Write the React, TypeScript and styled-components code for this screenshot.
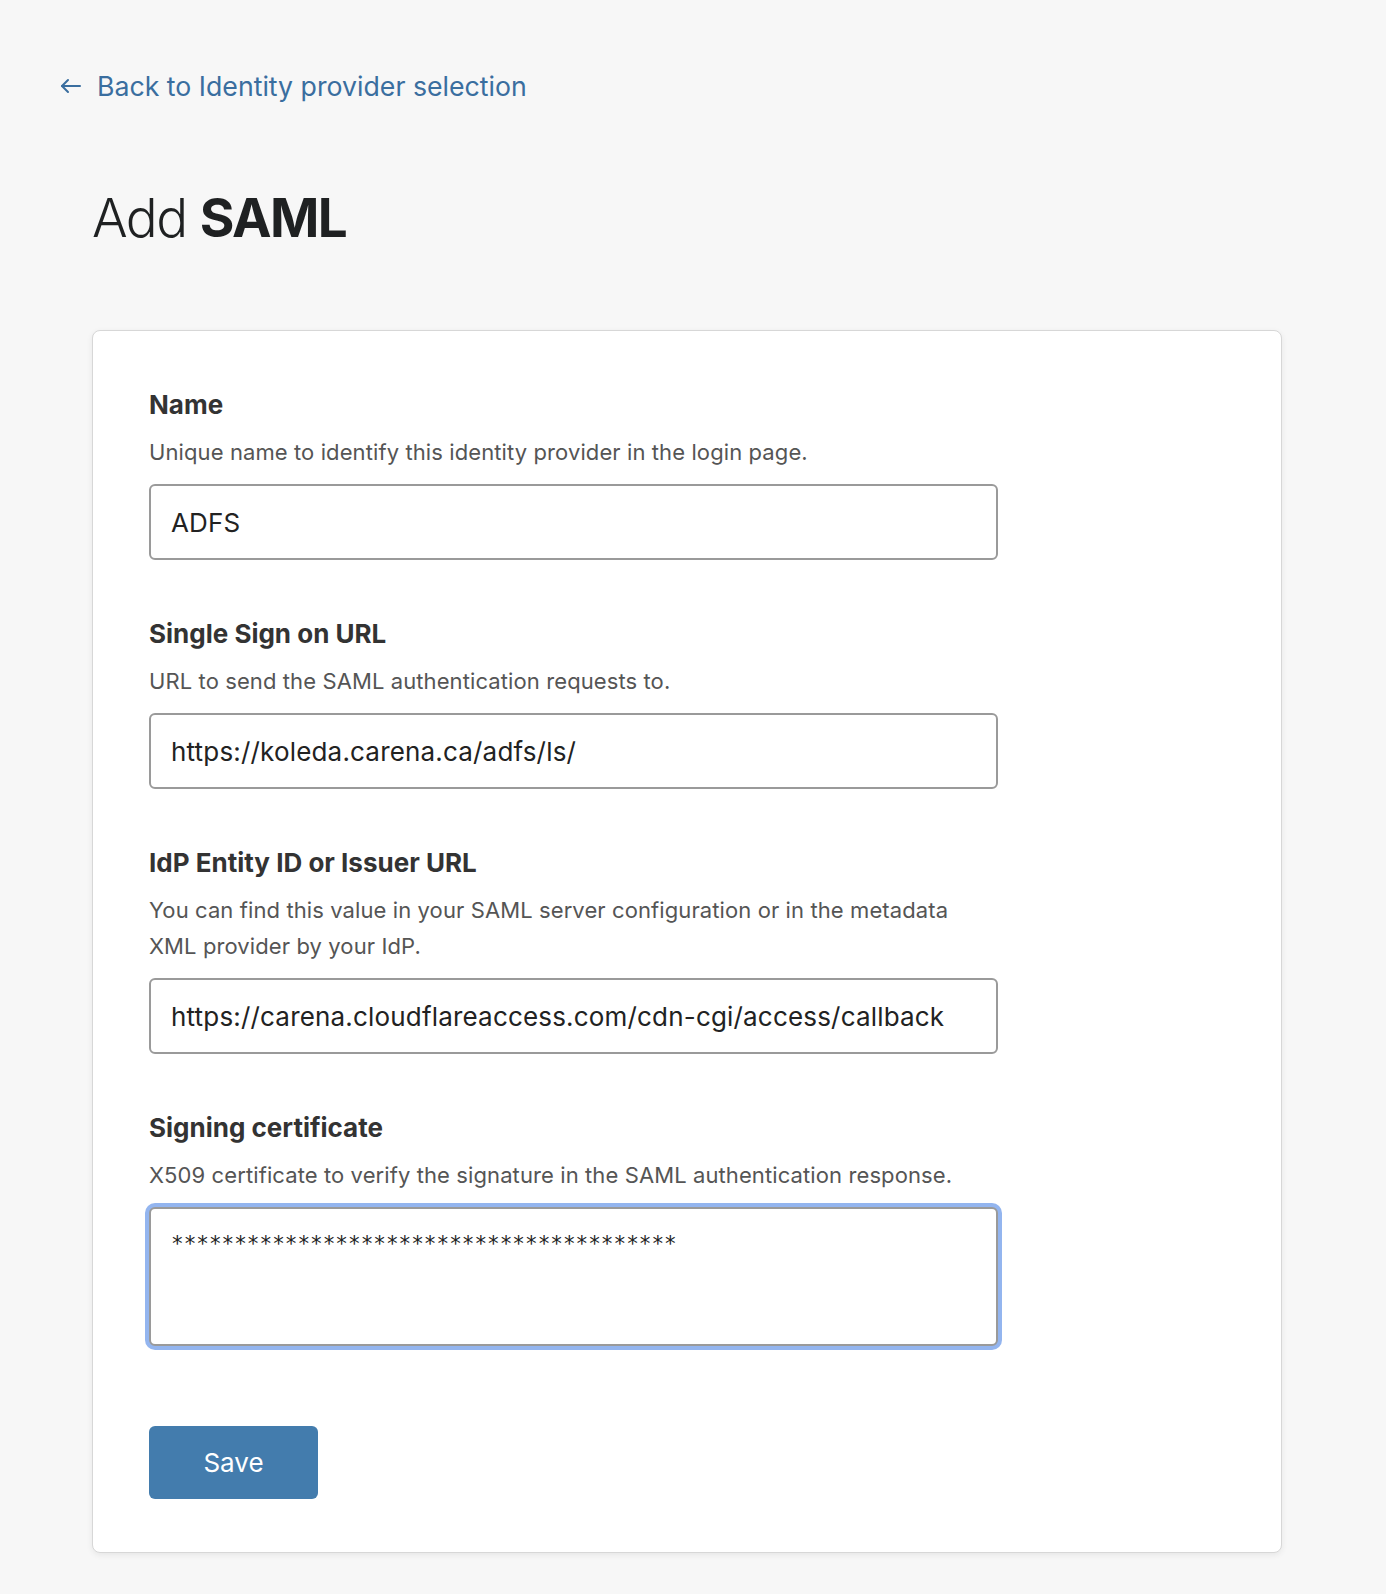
import React from 'react'
import styled, { createGlobalStyle } from 'styled-components'

const GlobalStyle = createGlobalStyle`
  html, body {
    margin: 0;
    padding: 0;
    background: #f7f7f7;
  }
  body {
    font-family: Inter, "Noto Sans", "Liberation Sans", sans-serif;
    color: #222;
  }
`

const Page = styled.div`
  min-height: 1594px;
  box-sizing: border-box;
  padding: 62px 104px 41px 60px;
`
const BackLink = styled.a`
  display: inline-flex;
  align-items: center;
  gap: 16px;
  font-size: 26.7px;
  line-height: 48px;
  color: #3a6e9f;
  text-decoration: none;
  cursor: pointer;

  > svg {
    flex: none;
  }
`
const Content = styled.div`
  padding-left: 32px;
`
const Title = styled.h1`
  margin: 76px 0 0;
  font-size: 53px;
  line-height: 64px;
  font-weight: 300;
  letter-spacing: -1.6px;
  color: #1f2122;

  > strong {
    font-weight: 700;
  }
`
const Card = styled.section`
  margin-top: 80px;
  padding: 58px 56px 53px;
  background: #fff;
  border: 1px solid #d7d7d7;
  border-radius: 8px;
  box-shadow: 0 2px 6px rgba(0, 0, 0, 0.07);
`
const Field = styled.div`
  & + & {
    margin-top: 58px;
  }
`
const Label = styled.label`
  display: block;
  font-size: 26px;
  line-height: 32px;
  font-weight: 700;
  color: #333;
`
const Hint = styled.p`
  margin: 13px 0 14px;
  max-width: 840px;
  font-size: 22px;
  line-height: 36px;
  letter-spacing: 0.1px;
  color: #555;
`
const TextInput = styled.input`
  display: block;
  box-sizing: border-box;
  width: 849px;
  height: 76px;
  padding: 0 20px;
  border: 2px solid #9a9a9a;
  border-radius: 6px;
  background: #fff;
  font-family: Inter, "Noto Sans", "Liberation Sans", sans-serif;
  font-size: 26px;
  letter-spacing: 0.18px;
  color: #222;
  outline: none;
`
const TextArea = styled.textarea<{ $focused?: boolean }>`
  display: block;
  box-sizing: border-box;
  width: 849px;
  height: 139px;
  padding: 21px 20px 18px;
  border: 2px solid #9a9a9a;
  border-radius: 6px;
  background: #fff;
  font-family: "DejaVu Sans Mono", "Liberation Mono", monospace;
  font-size: 21px;
  line-height: 28px;
  color: #222;
  resize: none;
  outline: none;
  box-shadow: ${({ $focused }) => ($focused ? '0 0 0 4px #93b5ef' : 'none')};
`
const SaveButton = styled.button`
  margin-top: 80px;
  width: 169px;
  height: 73px;
  border: none;
  border-radius: 6px;
  background: #437cad;
  color: #fff;
  font-family: Inter, "Noto Sans", "Liberation Sans", sans-serif;
  font-size: 26px;
  cursor: pointer;
`

const ArrowLeft = () => (
  <svg width="21" height="16" viewBox="0 0 21 16" fill="none" stroke="currentColor" strokeWidth="2" strokeLinecap="round" strokeLinejoin="round">
    <path d="M20 8H2" />
    <path d="M8 2L2 8l6 6" />
  </svg>
)

const fields = [
  {
    label: 'Name',
    hint: 'Unique name to identify this identity provider in the login page.',
    value: 'ADFS',
  },
  {
    label: 'Single Sign on URL',
    hint: 'URL to send the SAML authentication requests to.',
    value: 'https://koleda.carena.ca/adfs/ls/',
  },
  {
    label: 'IdP Entity ID or Issuer URL',
    hint: 'You can find this value in your SAML server configuration or in the metadata XML provider by your IdP.',
    value: 'https://carena.cloudflareaccess.com/cdn-cgi/access/callback',
  },
]

const App = () => {
  return (
    <Page>
      <GlobalStyle />
      <BackLink href="#">
        <ArrowLeft />
        Back to Identity provider selection
      </BackLink>

      <Content>
        <Title>
          Add <strong>SAML</strong>
        </Title>

        <Card>
          {fields.map((f) => (
            <Field key={f.label}>
              <Label>{f.label}</Label>
              <Hint>{f.hint}</Hint>
              <TextInput defaultValue={f.value} />
            </Field>
          ))}
          <Field>
            <Label>Signing certificate</Label>
            <Hint>X509 certificate to verify the signature in the SAML authentication response.</Hint>
            <TextArea $focused defaultValue={'*'.repeat(40)} />
          </Field>
          <SaveButton>Save</SaveButton>
        </Card>
      </Content>
    </Page>
  )
}

export default App
